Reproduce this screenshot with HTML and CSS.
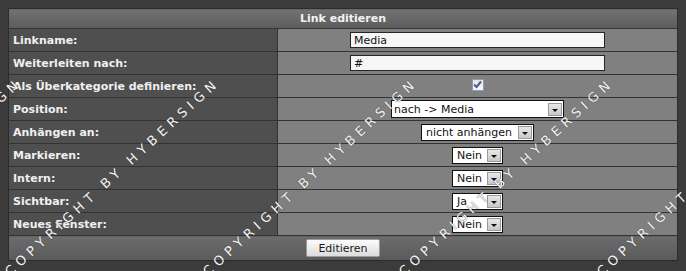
FILE: index.html
```
<!DOCTYPE html>
<html lang="de">

<head>
    <meta charset="UTF-8">
    <title>Link editieren</title>
    <link rel="stylesheet" href="styles.css">
</head>

<body>
    <div class="page">
        <table class="edit-table">
            <tr>
                <th colspan="2" class="head">Link editieren</th>
            </tr>
            <tr>
                <td class="label">Linkname:</td>
                <td class="value"><input type="text" class="text-input" value="Media"></td>
            </tr>
            <tr>
                <td class="label">Weiterleiten nach:</td>
                <td class="value"><input type="text" class="text-input" value="#"></td>
            </tr>
            <tr>
                <td class="label">Als Überkategorie definieren:</td>
                <td class="value">
                    <span class="check">
                        <svg width="9" height="9" viewBox="0 0 9 9"><path d="M1 4.5 L3.5 7 L8 1.5" fill="none" stroke="#4b5a9c" stroke-width="2"/></svg>
                    </span>
                </td>
            </tr>
            <tr>
                <td class="label">Position:</td>
                <td class="value">
                    <span class="pick pick-wide">
                        <span class="pick-text">nach -&gt; Media</span>
                        <span class="pick-btn"></span>
                    </span>
                </td>
            </tr>
            <tr>
                <td class="label">Anhängen an:</td>
                <td class="value">
                    <span class="pick pick-mid">
                        <span class="pick-text">nicht anhängen</span>
                        <span class="pick-btn"></span>
                    </span>
                </td>
            </tr>
            <tr>
                <td class="label">Markieren:</td>
                <td class="value">
                    <span class="pick pick-small">
                        <span class="pick-text">Nein</span>
                        <span class="pick-btn"></span>
                    </span>
                </td>
            </tr>
            <tr>
                <td class="label">Intern:</td>
                <td class="value">
                    <span class="pick pick-small">
                        <span class="pick-text">Nein</span>
                        <span class="pick-btn"></span>
                    </span>
                </td>
            </tr>
            <tr>
                <td class="label">Sichtbar:</td>
                <td class="value">
                    <span class="pick pick-small">
                        <span class="pick-text">Ja</span>
                        <span class="pick-btn"></span>
                    </span>
                </td>
            </tr>
            <tr>
                <td class="label">Neues Fenster:</td>
                <td class="value">
                    <span class="pick pick-small">
                        <span class="pick-text">Nein</span>
                        <span class="pick-btn"></span>
                    </span>
                </td>
            </tr>
            <tr>
                <td colspan="2" class="foot"><button class="submit">Editieren</button></td>
            </tr>
        </table>
    </div>

    <!-- watermark over the screenshot -->
    <div class="watermark">
        <span class="mark" style="left: -186px">COPYRIGHT BY HYBERSIGN</span>
        <span class="mark" style="left: 12px">COPYRIGHT BY HYBERSIGN</span>
        <span class="mark" style="left: 210px">COPYRIGHT BY HYBERSIGN</span>
        <span class="mark" style="left: 406px">COPYRIGHT BY HYBERSIGN</span>
        <span class="mark" style="left: 604px">COPYRIGHT BY HYBERSIGN</span>
    </div>
</body>

</html>
```

FILE: styles.css
```
body {
    margin: 0;
    background-color: #3b3b3b;
    font-family: "DejaVu Sans", Verdana, sans-serif;
    font-size: 11px;
    overflow: hidden;
}

.page {
    padding: 8px 8px 0 8px;
    width: 670px;
}

.edit-table {
    width: 670px;
    border-collapse: collapse;
    border: 1px solid #2c2c2c;
}

.head {
    height: 19px;
    padding: 0;
    background: linear-gradient(#727272, #5c5c5c);
    color: #f2f2f2;
    font-weight: bold;
    text-align: center;
    border-bottom: 1px solid #353535;
}

.label {
    width: 264px;
    height: 22px;
    padding: 0 0 0 4px;
    background-color: #4f4f4f;
    color: #f0f0f0;
    font-weight: bold;
    border-bottom: 1px solid #333;
    border-right: 1px solid #333;
}

.value {
    height: 22px;
    padding: 0;
    background-color: #808080;
    text-align: center;
    border-bottom: 1px solid #333;
}

.text-input {
    display: block;
    margin: 0 auto;
    box-sizing: border-box;
    width: 255px;
    height: 16px;
    padding: 0 3px;
    border: 1px solid #262626;
    background-color: #f6f6f6;
    font-family: "DejaVu Sans", Verdana, sans-serif;
    font-size: 11px;
    color: #111;
}

.check {
    display: inline-flex;
    align-items: center;
    justify-content: center;
    box-sizing: border-box;
    width: 12px;
    height: 12px;
    margin-bottom: 3px;
    border: 1px solid #8c9bb4;
    background: linear-gradient(#e4e4e4, #fafafa);
    vertical-align: middle;
}

.pick {
    display: inline-flex;
    align-items: center;
    box-sizing: border-box;
    height: 17px;
    border: 1px solid #111;
    background-color: #fff;
    vertical-align: middle;
    text-align: left;
}

.pick-text {
    flex: 1;
    padding-left: 5px;
    white-space: nowrap;
    overflow: hidden;
    color: #111;
    line-height: 15px;
}

.pick-btn {
    position: relative;
    flex: none;
    box-sizing: border-box;
    width: 14px;
    height: 13px;
    margin-right: 1px;
    border: 1px solid #9a9a9a;
    background: linear-gradient(#e8e8e8, #c8c8c8);
}

.pick-btn::after {
    content: "";
    position: absolute;
    left: 3px;
    top: 5px;
    border-left: 3px solid transparent;
    border-right: 3px solid transparent;
    border-top: 3px solid #111;
}

.pick-wide {
    width: 173px;
    height: 18px;
}

.pick-wide .pick-text {
    padding-left: 2px;
}

.pick-mid {
    width: 113px;
}

.pick-mid .pick-text {
    padding-left: 4px;
}

.pick-small {
    width: 51px;
}

.pick-small .pick-text {
    padding-left: 4px;
}

.foot {
    height: 24px;
    padding: 0;
    background: linear-gradient(#6c6c6c, #5a5a5a);
    text-align: center;
}

.submit {
    width: 74px;
    height: 18px;
    padding: 0;
    border: 1px solid #9c9c9c;
    border-radius: 2px;
    background: linear-gradient(#fbfbfb, #dcdcdc);
    font-family: "DejaVu Sans", Verdana, sans-serif;
    font-size: 11px;
    color: #1a1a1a;
    vertical-align: middle;
}

.watermark {
    position: absolute;
    left: 0;
    top: 0;
    width: 686px;
    height: 271px;
    overflow: hidden;
    pointer-events: none;
}

.mark {
    position: absolute;
    top: 264px;
    line-height: 15px;
    white-space: nowrap;
    font-family: "DejaVu Sans", sans-serif;
    font-size: 13px;
    letter-spacing: 5px;
    color: #f4f4f4;
    text-shadow: 0 0 1px #333;
    transform: rotate(-42.5deg);
    transform-origin: 0 100%;
}
```
